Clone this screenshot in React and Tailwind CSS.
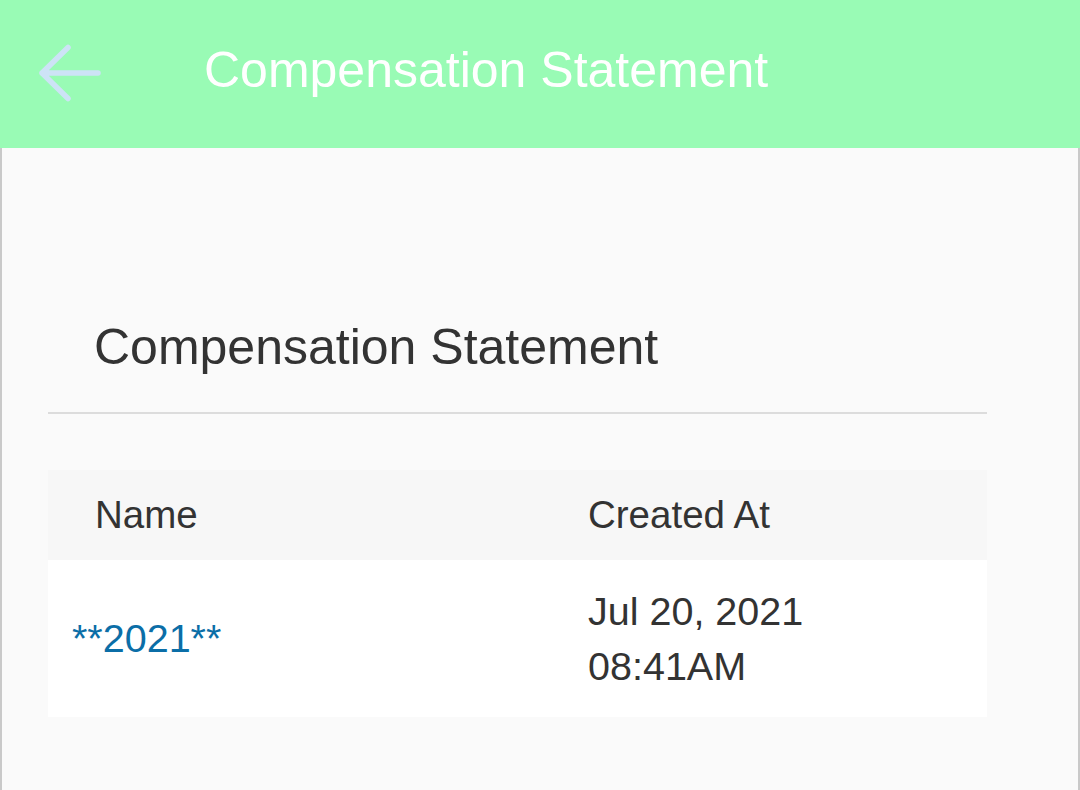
import React from 'react'

const BackArrow = () => (
  <svg width="64" height="60" viewBox="0 0 64 60" fill="none" className="shrink-0">
    <path d="M4 29H60M30 3.5L4 29L30 54.5" stroke="#cde3f6" strokeWidth="5.5" strokeLinecap="round" strokeLinejoin="round" />
  </svg>
)

const App = () => {
  return (
    <div className="w-[1080px] h-[790px] overflow-hidden bg-[#fafafa] font-['Liberation_Sans',Arial,sans-serif]">
      <header className="h-[148px] bg-[#99fbb5] flex items-center pl-[38px]">
        <BackArrow />
        <h1 className="ml-[102px] text-[50px] text-white leading-none pb-[8px]">Compensation Statement</h1>
      </header>

      <main className="h-[642px] border-x-2 border-[#c9c9c9] pl-[46px] pr-[91px]">
        <div className="pt-[176px] pl-[46px] pb-[40px] border-b-2 border-[#dcdcdc]">
          <h2 className="text-[50px] text-[#333] leading-none -mt-[2px]">Compensation Statement</h2>
        </div>

        <div className="mt-[56px]">
          <div className="h-[90px] bg-[#f7f7f7] flex items-center text-[38.5px] text-[#333]">
            <div className="w-[540px] pl-[47px]">Name</div>
            <div>Created At</div>
          </div>
          <div className="h-[157px] bg-white flex items-center text-[39.5px]">
            <div className="w-[540px] pl-[24px] text-[#0b6ea7]">**2021**</div>
            <div className="text-[#333] leading-[55px]">
              <div>Jul 20, 2021</div>
              <div>08:41AM</div>
            </div>
          </div>
        </div>
      </main>
    </div>
  )
}

export default App
